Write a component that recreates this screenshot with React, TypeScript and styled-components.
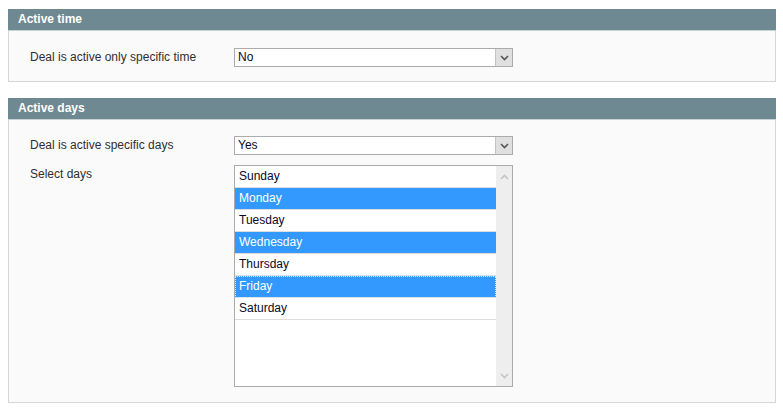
import styled, { createGlobalStyle } from "styled-components";

const Global = createGlobalStyle`
	body {
		margin: 0;
		background: #ffffff;
		font-family: Arial, "Liberation Sans", sans-serif;
		font-size: 12px;
		color: #2f2f2f;
	}
`

const Page = styled.div`
	padding: 9px 7px 0 8px;
	display: flex;
	flex-direction: column;
	gap: 16px;
`

const Section = styled.div`
	display: flex;
	flex-direction: column;
`

const Header = styled.div`
	height: 22px;
	line-height: 21px;
	padding-left: 10px;
	background: #6f8992;
	color: #ffffff;
	font-weight: bold;
	font-size: 12px;
	border-bottom: 1px solid #c8d0d3;
	box-sizing: border-box;
`

const Body = styled.div<{ $top: number; $bottom: number }>`
	background: #fafafa;
	border: 1px solid #d6d6d6;
	border-top: none;
	padding: ${p => p.$top}px 0 ${p => p.$bottom}px 21px;
	display: flex;
	flex-direction: column;
	gap: 10px;
`

const Row = styled.div`
	display: flex;
	align-items: flex-start;
`

const Label = styled.div`
	width: 204px;
	line-height: 18px;
	color: #2f2f2f;
`

const SelectBox = styled.div`
	width: 279px;
	height: 19px;
	box-sizing: border-box;
	border: 1px solid #ababab;
	background: #ffffff;
	display: flex;
	color: #0a0a1e;
`

const SelectValue = styled.div`
	flex: 1;
	padding-left: 3px;
	line-height: 17px;
`

const SelectButton = styled.div`
	width: 16px;
	background: #e0e0e0;
	border-left: 1px solid #c4c4c4;
	display: flex;
	align-items: center;
	justify-content: center;
`

const ListBox = styled.div`
	width: 279px;
	height: 222px;
	box-sizing: border-box;
	border: 1px solid #ababab;
	background: #ffffff;
	display: flex;
`

const Options = styled.div`
	flex: 1;
	display: flex;
	flex-direction: column;
`

const Option = styled.div<{ $selected: boolean; $focus: boolean }>`
	height: 22px;
	box-sizing: border-box;
	padding-left: 4px;
	line-height: 21px;
	border-bottom: 1px solid #dddddd;
	background: ${p => (p.$selected ? "#3399ff" : "#ffffff")};
	color: ${p => (p.$selected ? "#ffffff" : "#0a0a1e")};
	outline: ${p => (p.$focus ? "1px dotted #d8e8ff" : "none")};
	outline-offset: -1px;
`

const ScrollTrack = styled.div`
	width: 16px;
	background: #eeeeee;
	display: flex;
	flex-direction: column;
	justify-content: space-between;
	align-items: center;
	padding: 8px 0 7px 0;
`

const Chevron = ({ up, color }: { up?: boolean; color: string }) => (
	<svg width="9" height="6" viewBox="0 0 9 6">
		<path
			d={up ? "M1 5 L4.5 1.5 L8 5" : "M1 1 L4.5 4.5 L8 1"}
			fill="none"
			stroke={color}
			strokeWidth="1.6"
		/>
	</svg>
)

const days = ["Sunday", "Monday", "Tuesday", "Wednesday", "Thursday", "Friday", "Saturday"]
const picked = ["Monday", "Wednesday", "Friday"]

const Select = ({ value }: { value: string }) => (
	<SelectBox>
		<SelectValue>{value}</SelectValue>
		<SelectButton>
			<Chevron color="#555555" />
		</SelectButton>
	</SelectBox>
)

const App = () => {
	return (
		<Page>
			<Global />
			<Section>
				<Header>Active time</Header>
				<Body $top={17} $bottom={14}>
					<Row>
						<Label>Deal is active only specific time</Label>
						<Select value="No" />
					</Row>
				</Body>
			</Section>
			<Section>
				<Header>Active days</Header>
				<Body $top={16} $bottom={15}>
					<Row>
						<Label>Deal is active specific days</Label>
						<Select value="Yes" />
					</Row>
					<Row>
						<Label>Select days</Label>
						<ListBox>
							<Options>
								{days.map(d => (
									<Option key={d} $selected={picked.includes(d)} $focus={d === "Friday"}>
										{d}
									</Option>
								))}
							</Options>
							<ScrollTrack>
								<Chevron up color="#c4c4c4" />
								<Chevron color="#c4c4c4" />
							</ScrollTrack>
						</ListBox>
					</Row>
				</Body>
			</Section>
		</Page>
	)
}

export default App;
